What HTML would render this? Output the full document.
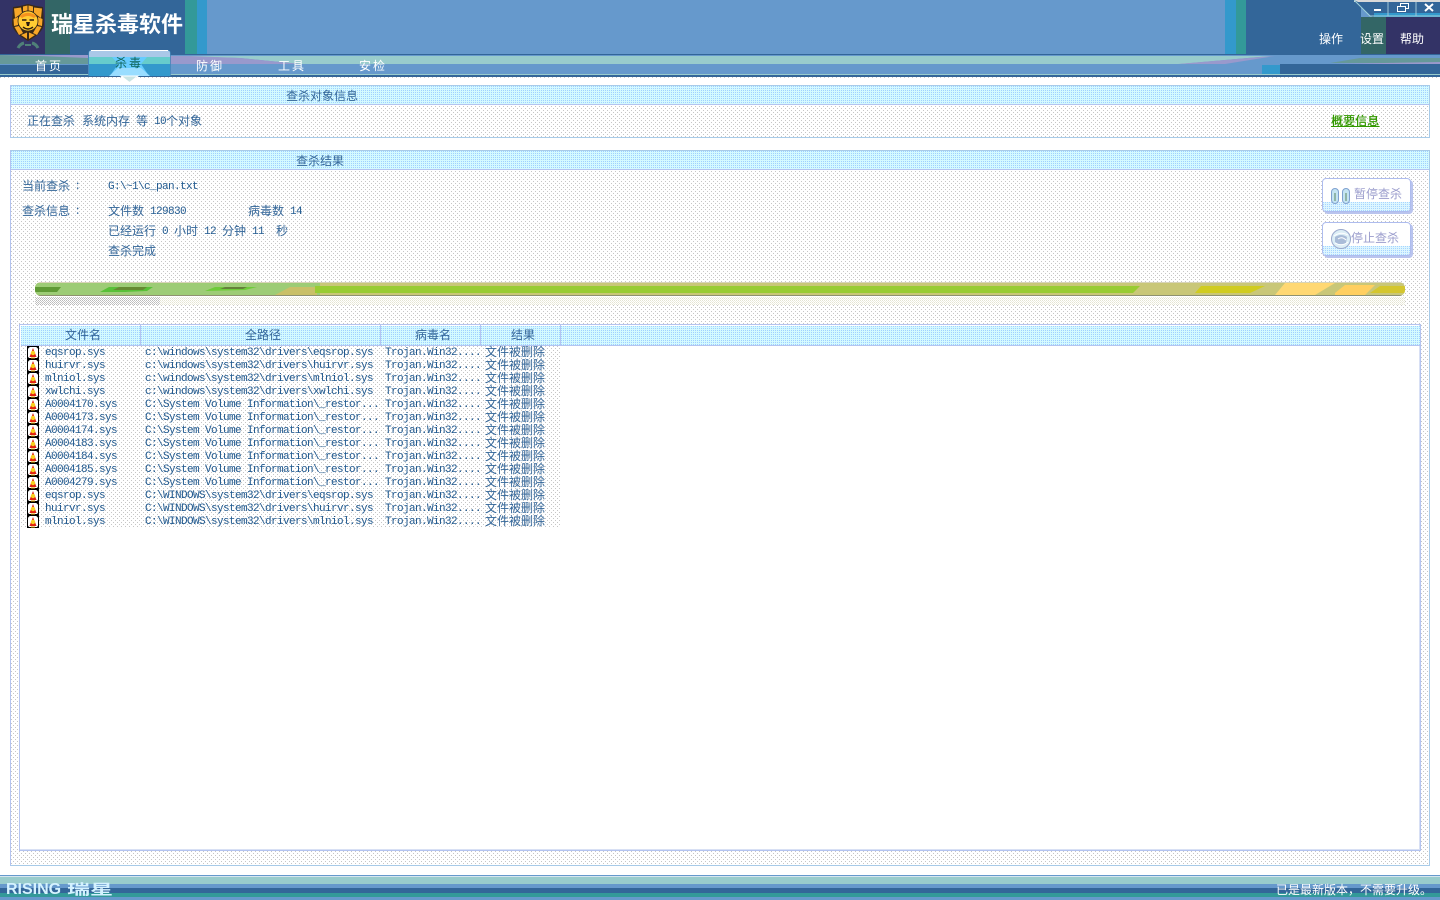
<!DOCTYPE html>
<html lang="zh">
<head>
<meta charset="utf-8">
<title>瑞星杀毒软件</title>
<style>
html,body{margin:0;padding:0;width:1440px;height:900px;overflow:hidden;background:#fff}
body{position:relative;font-family:"Liberation Mono","WenQuanYi Zen Hei","Noto Sans CJK SC",monospace;font-size:12px;color:#336699}
.a{position:absolute;white-space:pre}
.t{position:absolute;white-space:pre;line-height:14px;height:14px}
.dot{background-color:#fff;background-image:conic-gradient(from 270deg at 1px 1px,#c6c6c6 25%,transparent 0),conic-gradient(from 270deg at 1px 1px,#c6c6c6 25%,transparent 0);background-size:4px 4px;background-position:0 0,2px 2px}
.chk{background-color:#d4faff;background-image:conic-gradient(from 270deg at 1px 1px,#a0d0ff 25%,transparent 0);background-size:2px 2px}
.panel{position:absolute;left:10px;width:1418px;border:1px solid #a8cbe8;border-left-color:#b4c4f0;box-sizing:content-box}
.head{position:absolute;left:0;top:0;right:0;height:18px;border-bottom:1px solid #b4c4f0}
.m{font-family:"Liberation Mono",monospace;font-size:11px;letter-spacing:-.6px;color:#215a90}
.c{font-family:"WenQuanYi Zen Hei","Noto Sans CJK SC",sans-serif;font-size:12px}
.r{position:absolute;left:0;width:540px;height:13px;line-height:13px;font-family:"Liberation Mono",monospace;font-size:11px;letter-spacing:-.6px;color:#215a90}
.r span{position:absolute;top:1px;white-space:pre}
.r .z{left:465px;top:-1px;font-family:"WenQuanYi Zen Hei","Noto Sans CJK SC",sans-serif;font-size:12px;letter-spacing:0;color:#336699}
.r svg{position:absolute;left:7px;top:0}
.btn{position:absolute;left:1322px;width:87px;height:32px;border:1px solid #aebcee;border-radius:4px;box-shadow:2px 2px 0 #b9c4ee;background:#fff}
.btn i{position:absolute;left:0;right:0;bottom:0;height:9px;background-color:#ddf6ff;background-image:conic-gradient(from 270deg at 1px 1px,#a6d4ff 25%,transparent 0);background-size:2px 2px;border-radius:0 0 3px 3px}
.btn b{position:absolute;top:8px;font:normal 12px/14px "WenQuanYi Zen Hei","Noto Sans CJK SC",sans-serif;color:#9a9ccc}
.w{color:#fff}
.col{position:absolute;top:0;height:20px;width:1px;background:#b4c4f0}
</style>
</head>
<body>

<!-- title bar -->
<div class="a" style="left:0;top:0;width:1440px;height:55px;background:#6699cc"></div>
<div class="a" style="left:0;top:0;width:45px;height:55px;background:#333366"></div>
<div class="a" style="left:45px;top:0;width:25px;height:55px;background:#336666"></div>
<div class="a" style="left:70px;top:0;width:115px;height:55px;background:#336699"></div>
<div class="a" style="left:185px;top:0;width:12px;height:55px;background:#339999"></div>
<div class="a" style="left:197px;top:0;width:10px;height:55px;background:#3399cc"></div>
<div class="a" style="left:1225px;top:0;width:11px;height:55px;background:#3399cc"></div>
<div class="a" style="left:1236px;top:0;width:10px;height:55px;background:#339999"></div>
<div class="a" style="left:1246px;top:0;width:115px;height:55px;background:#336699"></div>
<div class="a" style="left:1361px;top:17px;width:25px;height:38px;background:#336666"></div>
<div class="a" style="left:1386px;top:17px;width:54px;height:38px;background:#333366"></div>

<!-- logo -->
<svg class="a" style="left:10px;top:4px" width="36" height="46" viewBox="0 0 36 46">
<path d="M3 3 L10 2 L18 0 L26 2 L33 3 L34 20 Q33 29 18 37 Q3 29 2 20Z" fill="#3a2a18"/>
<path d="M4 4.500L11 3.500L12 9L5 14Z M13 2.500L17.500 1.500V6.500L13 7.500Z M18.500 1.500L23 2.500V7.500L18.500 6.500Z M24 3.500L32 4.500L31 14L24 9Z" fill="#f8a828"/>
<path d="M3.500 15L8 13L8 21L4 22Z M28 13L32.500 15L32 22L28 21Z M4.500 23L9 22L13 29L9 31Z M27 22L31.500 23L27 31L23 29Z M11 31L17 28.500V35Z M25 31L19 28.500V35Z" fill="#f8a828"/>
<circle cx="18" cy="17" r="10" fill="#ffcc33" stroke="#3a2a18" stroke-width=".8"/>
<path d="M9.500 12Q18 5.500 26.500 12L24 14Q18 10 12 14Z" fill="#f5921e"/>
<path d="M12 16h4.500M19.500 16h4.500" stroke="#2a1c10" stroke-width="1.600"/>
<path d="M16 18H20L19 22H17Z" fill="#2a1c10"/>
<path d="M13 23Q18 27 23 23" stroke="#2a1c10" stroke-width="1.400" fill="none"/>
<path d="M8 44Q10 40 14 39M28 44Q26 40 22 39" stroke="#4f8078" stroke-width="3" fill="none"/>
<path d="M15 41H21" stroke="#4f8078" stroke-width="2"/>
</svg>
<div class="a" style="left:51px;top:10px;font:bold 22px/26px 'WenQuanYi Zen Hei','Noto Sans CJK SC',sans-serif;color:#fff;letter-spacing:0">瑞星杀毒软件</div>

<!-- window buttons -->
<svg class="a" style="left:1354px;top:0" width="86" height="19" viewBox="0 0 86 19">
<rect x="0" y="0" width="86" height="2" fill="#d9d9d9"/>
<path d="M0 0 L18 17 L86 17 L86 2 L4 2Z" fill="#336699"/>
<rect x="20" y="13" width="66" height="4" fill="#3399cc"/>
<path d="M0 0 L16 16 L86 16" stroke="#9fd0d8" stroke-width="1" fill="none"/>
<path d="M34 2V16M62 2V16" stroke="#9fc5d8"/>
<rect x="20" y="9" width="7" height="2" fill="#fff"/>
<path d="M46.500 6.500V3.500H54.500V8.500H51.500M43.500 6.500H51.500V11.500H43.500Z" stroke="#fff" fill="none"/>
<path d="M71 4L79 11M79 4L71 11" stroke="#fff" stroke-width="2"/>
</svg>
<div class="t c w" style="left:1319px;top:32px">操作</div>
<div class="t c w" style="left:1360px;top:32px">设置</div>
<div class="t c w" style="left:1400px;top:32px">帮助</div>

<!-- nav strip -->
<div class="a" style="left:0;top:54px;width:1440px;height:1px;background:#336699"></div>
<div class="a" style="left:0;top:55px;width:1440px;height:21px;background:#6699cc"></div>
<svg class="a" style="left:0;top:55px" width="1440" height="21" viewBox="0 0 1440 21">
<path d="M0 0H88V9H0Z" fill="#669999"/>
<path d="M0 0H88V3L40 1Z" fill="#9999cc"/>
<rect x="0" y="10" width="88" height="11" fill="#336699"/>
<path d="M170 1H1270L1180 9H300L240 3Z" fill="#99cccc"/>
<path d="M170 1H190L240 3L300 9H170Z" fill="#9999cc"/>
<path d="M1178 9L1260 2L1275 1L1225 9Z" fill="#9999cc"/>
<path d="M1330 8L1360 3H1440V8Z" fill="#669999"/>
<path d="M1330 9L1440 7V9Z" fill="#9999cc"/>
<rect x="1262" y="10" width="18" height="9" fill="#3399cc"/>
<rect x="1280" y="9" width="160" height="12" fill="#336699"/>
<rect x="1355" y="19" width="40" height="2" fill="#9999cc"/>
</svg>
<div class="a" style="left:0;top:75px;width:1440px;height:2px;background:#336699"></div>
<div class="a" style="left:0;top:74px;width:1440px;height:1px;background:#99cccc"></div>
<div class="a dot" style="left:0;top:77px;width:1440px;height:2px"></div>

<!-- active tab -->
<svg class="a" style="left:88px;top:49px" width="83" height="34" viewBox="0 0 83 34">
<path d="M0.500 27V4Q0.500 1 4 1H79Q82.500 1 82.500 4V27Z" fill="#66ccff"/>
<path d="M1 8V4Q1 1.500 4 1.500H79Q82 1.500 82 4V8Z" fill="#aac8e8"/>
<path d="M1 8H24L30 15H1Z" fill="#66cccc"/>
<path d="M82 8H59L53 15H82Z" fill="#66cccc"/>
<path d="M1 15H30L22 27H1Z" fill="#3399cc"/>
<path d="M82 15H53L61 27H82Z" fill="#3399cc"/>
<path d="M30 19H53L62 27H21Z" fill="#99ddff"/>
<path d="M0.500 27V4Q0.500 1 4 1H79Q82.500 1 82.500 4V27" fill="none" stroke="#336699" stroke-opacity=".55"/>
<path d="M3 1.500H80" stroke="#fff"/>
<path d="M33 27H50L41.500 33.500Z" fill="#c9e4e4" stroke="#fff"/>
</svg>

<div class="t c w" style="left:35px;top:59px;letter-spacing:2px">首页</div>
<div class="t c" style="left:115px;top:56px;letter-spacing:2px;color:#0e6458">杀毒</div>
<div class="t c w" style="left:196px;top:59px;letter-spacing:2px">防御</div>
<div class="t c w" style="left:278px;top:59px;letter-spacing:2px">工具</div>
<div class="t c w" style="left:359px;top:59px;letter-spacing:2px">安检</div>

<!-- panel 1 -->
<div class="panel dot" style="top:85px;height:51px">
  <div class="head chk"></div>
</div>
<div class="t c" style="left:286px;top:89px">查杀对象信息</div>
<div class="t c" style="left:27px;top:114px">正在查杀</div>
<div class="t c" style="left:82px;top:114px">系统内存</div>
<div class="t c" style="left:136px;top:114px">等</div>
<div class="t m" style="left:154px;top:115px">10</div>
<div class="t c" style="left:166px;top:114px">个对象</div>
<div class="t c" style="left:1331px;top:114px;color:#339900;text-decoration:underline;text-shadow:.4px 0 #339900">概要信息</div>

<!-- panel 2 -->
<div class="panel dot" style="top:150px;height:714px">
  <div class="head chk"></div>
</div>
<div class="t c" style="left:296px;top:154px">查杀结果</div>
<div class="t c" style="left:22px;top:179px">当前查杀</div>
<div class="t c" style="left:76px;top:178px">:</div>
<div class="t m" style="left:108px;top:180px">G:\~1\c_pan.txt</div>
<div class="t c" style="left:22px;top:204px">查杀信息</div>
<div class="t c" style="left:76px;top:203px">:</div>
<div class="t c" style="left:108px;top:204px">文件数</div>
<div class="t m" style="left:150px;top:205px">129830</div>
<div class="t c" style="left:248px;top:204px">病毒数</div>
<div class="t m" style="left:290px;top:205px">14</div>
<div class="t c" style="left:108px;top:224px">已经运行</div>
<div class="t m" style="left:162px;top:225px">0</div>
<div class="t c" style="left:174px;top:224px">小时</div>
<div class="t m" style="left:204px;top:225px">12</div>
<div class="t c" style="left:222px;top:224px">分钟</div>
<div class="t m" style="left:252px;top:225px">11</div>
<div class="t c" style="left:276px;top:224px">秒</div>
<div class="t c" style="left:108px;top:244px">查杀完成</div>

<!-- buttons -->
<div class="btn" style="top:178px"><i></i>
  <svg class="a" style="left:7px;top:7px" width="22" height="20" viewBox="0 0 22 20">
  <rect x="1.500" y="2.500" width="7" height="15" rx="3.500" fill="#c4e4f2" stroke="#7ea0d0"/>
  <rect x="12.500" y="2.500" width="7" height="15" rx="3.500" fill="#c4e4f2" stroke="#7ea0d0"/>
  <path d="M5 7v8M16 7v8" stroke="#8fb5a8" stroke-width="2"/>
  </svg>
  <b style="left:31px">暂停查杀</b>
</div>
<div class="btn" style="top:222px"><i></i>
  <svg class="a" style="left:7px;top:5px" width="22" height="22" viewBox="0 0 22 22">
  <circle cx="11" cy="11" r="9.500" fill="#dceef6" stroke="#9aa8cc"/>
  <path d="M5 9Q11 5 17 9L16 15Q10 18 5 14Z" fill="#a9bcd8"/>
  <path d="M4 8Q11 3 18 7M5 15Q12 19 18 14M8 11Q12 8 16 12" stroke="#fff" fill="none"/>
  </svg>
  <b style="left:28px">停止查杀</b>
</div>

<!-- progress bar -->
<svg class="a" style="left:35px;top:282px" width="1370" height="14" viewBox="0 0 1370 14">
<defs><clipPath id="pc"><rect width="1370" height="14" rx="6"/></clipPath></defs>
<g clip-path="url(#pc)">
<rect width="1370" height="14" fill="#c9c778"/>
<path d="M0 1H285V13H0Z" fill="#9dcc76"/>
<path d="M0 5H26L22 10H0Z" fill="#5f9a35"/>
<path d="M65 10L74 5H118L112 9L90 10Z" fill="#58c038"/>
<path d="M78 8L84 5H112L108 8Z" fill="#668a32"/>
<path d="M170 9L180 5H222L210 8Z" fill="#6ecb3a"/>
<path d="M185 7L190 5H212L208 7Z" fill="#64803a"/>
<path d="M240 13L255 5H282V13Z" fill="#c9c068"/>
<path d="M280 4H1105L1098 11H280Z" fill="#99cc33"/>
<path d="M1160 11L1166 4H1230L1215 11Z" fill="#d0cc20"/>
<path d="M1240 13L1250 1H1300L1280 13Z" fill="#ffd873"/>
<path d="M1300 11L1310 3H1340L1330 13H1300Z" fill="#ffcf60"/>
<path d="M1335 11L1345 4H1370V11Z" fill="#d4c62e"/>
<rect y="0" width="1370" height="1" fill="#d8d4b8"/>
<rect y="13" width="1370" height="1" fill="#8f9270"/>
</g>
</svg>
<div class="a" style="left:35px;top:297px;width:1370px;height:8px;background:conic-gradient(#fff 0 25%,#e4e4d2 0 50%,#fff 0 75%,#eeeee0 0) 0 0/2px 2px"></div>
<div class="a" style="left:35px;top:297px;width:125px;height:8px;background:conic-gradient(#fff 0 25%,#bbb 0 50%,#fff 0 75%,#c8c8c8 0) 0 0/2px 2px"></div>

<!-- list -->
<div class="a" style="left:19px;top:324px;width:1400px;height:525px;border:1px solid #b4c4f0;background:#fff;box-shadow:inset -1px -1px 0 #d8e0f4">
  <div class="a chk" style="left:1px;top:1px;width:1399px;height:19px;border-bottom:1px solid #b4c4f0"></div>
  <div class="col" style="left:120px"></div>
  <div class="col" style="left:360px"></div>
  <div class="col" style="left:460px"></div>
  <div class="col" style="left:540px"></div>
  <div class="t c" style="left:45px;top:3px">文件名</div>
  <div class="t c" style="left:225px;top:3px">全路径</div>
  <div class="t c" style="left:395px;top:3px">病毒名</div>
  <div class="t c" style="left:491px;top:3px">结果</div>
  <div class="a dot" style="left:1px;top:21px;width:540px;height:182px"></div>

  <svg width="0" height="0" style="position:absolute"><defs>
  <g id="bug">
    <rect x="0.500" y="0.500" width="11" height="12" fill="#fff" stroke="#000"/>
    <path d="M0 3L3 0M12 3L9 0M0 10L2 13M12 10L10 13" stroke="#000"/>
    <path d="M6 2L9.500 11H2.500Z" fill="#e02010"/>
    <circle cx="6" cy="7" r="2.200" fill="#f8d020"/>
    <path d="M4 12H8" stroke="#e0a000"/>
  </g></defs></svg>

  <div class="r" style="top:21px"><svg width="12" height="13"><use href="#bug"/></svg><span style="left:25px">eqsrop.sys</span><span style="left:125px">c:\windows\system32\drivers\eqsrop.sys</span><span style="left:365px">Trojan.Win32....</span><span class="z">文件被删除</span></div>
  <div class="r" style="top:34px"><svg width="12" height="13"><use href="#bug"/></svg><span style="left:25px">huirvr.sys</span><span style="left:125px">c:\windows\system32\drivers\huirvr.sys</span><span style="left:365px">Trojan.Win32....</span><span class="z">文件被删除</span></div>
  <div class="r" style="top:47px"><svg width="12" height="13"><use href="#bug"/></svg><span style="left:25px">mlniol.sys</span><span style="left:125px">c:\windows\system32\drivers\mlniol.sys</span><span style="left:365px">Trojan.Win32....</span><span class="z">文件被删除</span></div>
  <div class="r" style="top:60px"><svg width="12" height="13"><use href="#bug"/></svg><span style="left:25px">xwlchi.sys</span><span style="left:125px">c:\windows\system32\drivers\xwlchi.sys</span><span style="left:365px">Trojan.Win32....</span><span class="z">文件被删除</span></div>
  <div class="r" style="top:73px"><svg width="12" height="13"><use href="#bug"/></svg><span style="left:25px">A0004170.sys</span><span style="left:125px">C:\System Volume Information\_restor...</span><span style="left:365px">Trojan.Win32....</span><span class="z">文件被删除</span></div>
  <div class="r" style="top:86px"><svg width="12" height="13"><use href="#bug"/></svg><span style="left:25px">A0004173.sys</span><span style="left:125px">C:\System Volume Information\_restor...</span><span style="left:365px">Trojan.Win32....</span><span class="z">文件被删除</span></div>
  <div class="r" style="top:99px"><svg width="12" height="13"><use href="#bug"/></svg><span style="left:25px">A0004174.sys</span><span style="left:125px">C:\System Volume Information\_restor...</span><span style="left:365px">Trojan.Win32....</span><span class="z">文件被删除</span></div>
  <div class="r" style="top:112px"><svg width="12" height="13"><use href="#bug"/></svg><span style="left:25px">A0004183.sys</span><span style="left:125px">C:\System Volume Information\_restor...</span><span style="left:365px">Trojan.Win32....</span><span class="z">文件被删除</span></div>
  <div class="r" style="top:125px"><svg width="12" height="13"><use href="#bug"/></svg><span style="left:25px">A0004184.sys</span><span style="left:125px">C:\System Volume Information\_restor...</span><span style="left:365px">Trojan.Win32....</span><span class="z">文件被删除</span></div>
  <div class="r" style="top:138px"><svg width="12" height="13"><use href="#bug"/></svg><span style="left:25px">A0004185.sys</span><span style="left:125px">C:\System Volume Information\_restor...</span><span style="left:365px">Trojan.Win32....</span><span class="z">文件被删除</span></div>
  <div class="r" style="top:151px"><svg width="12" height="13"><use href="#bug"/></svg><span style="left:25px">A0004279.sys</span><span style="left:125px">C:\System Volume Information\_restor...</span><span style="left:365px">Trojan.Win32....</span><span class="z">文件被删除</span></div>
  <div class="r" style="top:164px"><svg width="12" height="13"><use href="#bug"/></svg><span style="left:25px">eqsrop.sys</span><span style="left:125px">C:\WINDOWS\system32\drivers\eqsrop.sys</span><span style="left:365px">Trojan.Win32....</span><span class="z">文件被删除</span></div>
  <div class="r" style="top:177px"><svg width="12" height="13"><use href="#bug"/></svg><span style="left:25px">huirvr.sys</span><span style="left:125px">C:\WINDOWS\system32\drivers\huirvr.sys</span><span style="left:365px">Trojan.Win32....</span><span class="z">文件被删除</span></div>
  <div class="r" style="top:190px"><svg width="12" height="13"><use href="#bug"/></svg><span style="left:25px">mlniol.sys</span><span style="left:125px">C:\WINDOWS\system32\drivers\mlniol.sys</span><span style="left:365px">Trojan.Win32....</span><span class="z">文件被删除</span></div>
</div>

<!-- footer -->
<div class="a" style="left:0;top:875px;width:1440px;height:1px;background:#6699cc"></div>
<div class="a" style="left:0;top:876px;width:1440px;height:1px;background:#d5e6f0"></div>
<div class="a" style="left:0;top:877px;width:1440px;height:7px;background:#99cccc"></div>
<div class="a" style="left:0;top:884px;width:1440px;height:4px;background:#6699cc"></div>
<div class="a" style="left:0;top:888px;width:1440px;height:5px;background:#336699"></div>
<div class="a" style="left:0;top:893px;width:1440px;height:4px;background:#339999"></div>
<div class="a" style="left:0;top:897px;width:1440px;height:3px;background:#6699cc"></div>
<div class="a" style="left:6px;top:882px;font:bold 16px/15px 'Liberation Sans',sans-serif;color:#d4f2ff;letter-spacing:0">RISING</div>
<div class="a" style="left:67px;top:877px;font:bold 23px/23px 'WenQuanYi Zen Hei','Noto Sans CJK SC',sans-serif;color:#d4f2ff;transform:scaleY(.62);transform-origin:0 50%">瑞星</div>
<div class="t c w" style="left:1276px;top:883px">已是最新版本，不需要升级。</div>

</body>
</html>
